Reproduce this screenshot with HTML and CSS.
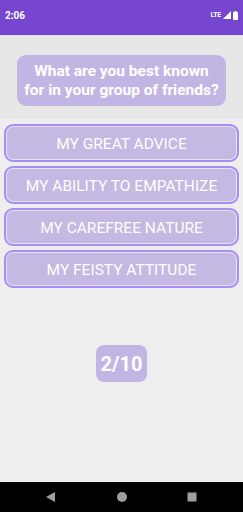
FILE: index.html
```html
<!DOCTYPE html>
<html lang="en">
<head>
  <meta charset="UTF-8">
  <meta name="viewport" content="width=device-width, initial-scale=1.0">
  <title>Quiz</title>
  <link rel="stylesheet" href="styles.css">
</head>
<body>
  <div class="phone">
    <!-- Status bar -->
    <div class="status-bar">
      <span class="time">2:06</span>
      <div class="status-icons">
        <span class="lte">LTE</span>
        <svg width="8" height="8" viewBox="0 0 8 8"><path d="M8 0 L8 8 L0 8 Z" fill="#fff"/></svg>
        <svg width="5" height="9" viewBox="0 0 5 9"><rect x="1.5" y="0" width="2" height="1" fill="#fff"/><rect x="0" y="1" width="5" height="8" rx="0.8" fill="#fff"/></svg>
      </div>
    </div>

    <div class="question-area">
      <div class="question">What are you best known<br>for in your group of friends?</div>
    </div>

    <div class="answers">
      <button class="answer">MY GREAT ADVICE</button>
      <button class="answer">MY ABILITY TO EMPATHIZE</button>
      <button class="answer">MY CAREFREE NATURE</button>
      <button class="answer">MY FEISTY ATTITUDE</button>
    </div>

    <div class="progress-wrap">
      <div class="progress">2/10</div>
    </div>

    <!-- Nav bar -->
    <div class="nav-bar">
      <svg width="12" height="12" viewBox="0 0 12 12"><path d="M10 1 L10 11 L1 6 Z" fill="#9e9e9e"/></svg>
      <svg width="12" height="12" viewBox="0 0 12 12"><circle cx="6" cy="6" r="5" fill="#9e9e9e"/></svg>
      <svg width="12" height="12" viewBox="0 0 12 12"><rect x="1.5" y="1.5" width="9" height="9" fill="#9e9e9e"/></svg>
    </div>
  </div>
</body>
</html>
```

FILE: styles.css
```css
* {
  margin: 0;
  padding: 0;
  box-sizing: border-box;
}

body, html {
  width: 100%;
  height: 100%;
  overflow: hidden;
  font-family: Roboto, "Liberation Sans", sans-serif;
}

.phone {
  display: flex;
  flex-direction: column;
  height: 512px;
  background: #eeeeee;
}

.status-bar {
  height: 35px;
  background: #7646d0;
  border-bottom: 1px solid #6a3cc0;
  display: flex;
  justify-content: space-between;
  align-items: center;
  padding: 0 5px 4px 5px;
  color: #fff;
}

.time {
  font-size: 10px;
  font-weight: 700;
}

.status-icons {
  display: flex;
  align-items: center;
  gap: 2px;
}

.lte {
  font-size: 7px;
  font-weight: 700;
  letter-spacing: -0.3px;
}

.question-area {
  background: #e7e7e7;
  height: 84px;
  padding: 20px 17px 0 17px;
}

.question {
  background: #c3b5e3;
  border-radius: 9px;
  height: 51px;
  color: #fff;
  font-size: 15.5px;
  font-weight: 700;
  line-height: 19px;
  text-align: center;
  white-space: nowrap;
  padding-top: 7px;
}

.answers {
  display: flex;
  flex-direction: column;
  gap: 4px;
  padding: 5px 4px 0 4px;
}

.answer {
  height: 38px;
  background: #c5b8e2;
  border: 2px solid #a68ef4;
  box-shadow: inset 0 0 0 1px #e9e1fa;
  border-radius: 9px;
  color: #fff;
  font-family: Roboto, "Liberation Sans", sans-serif;
  font-size: 15.5px;
  font-weight: 400;
  text-align: center;
  padding-top: 2px;
}

.progress-wrap {
  flex: 1;
  display: flex;
  justify-content: center;
  padding-top: 57px;
}

.progress {
  width: 51px;
  height: 37px;
  background: #c3b5e3;
  border-radius: 8px;
  color: #fff;
  font-size: 20px;
  font-weight: 700;
  display: flex;
  align-items: center;
  justify-content: center;
}

.nav-bar {
  height: 30px;
  background: #000;
  display: flex;
  justify-content: space-between;
  align-items: center;
  padding: 0 45px;
}
```
